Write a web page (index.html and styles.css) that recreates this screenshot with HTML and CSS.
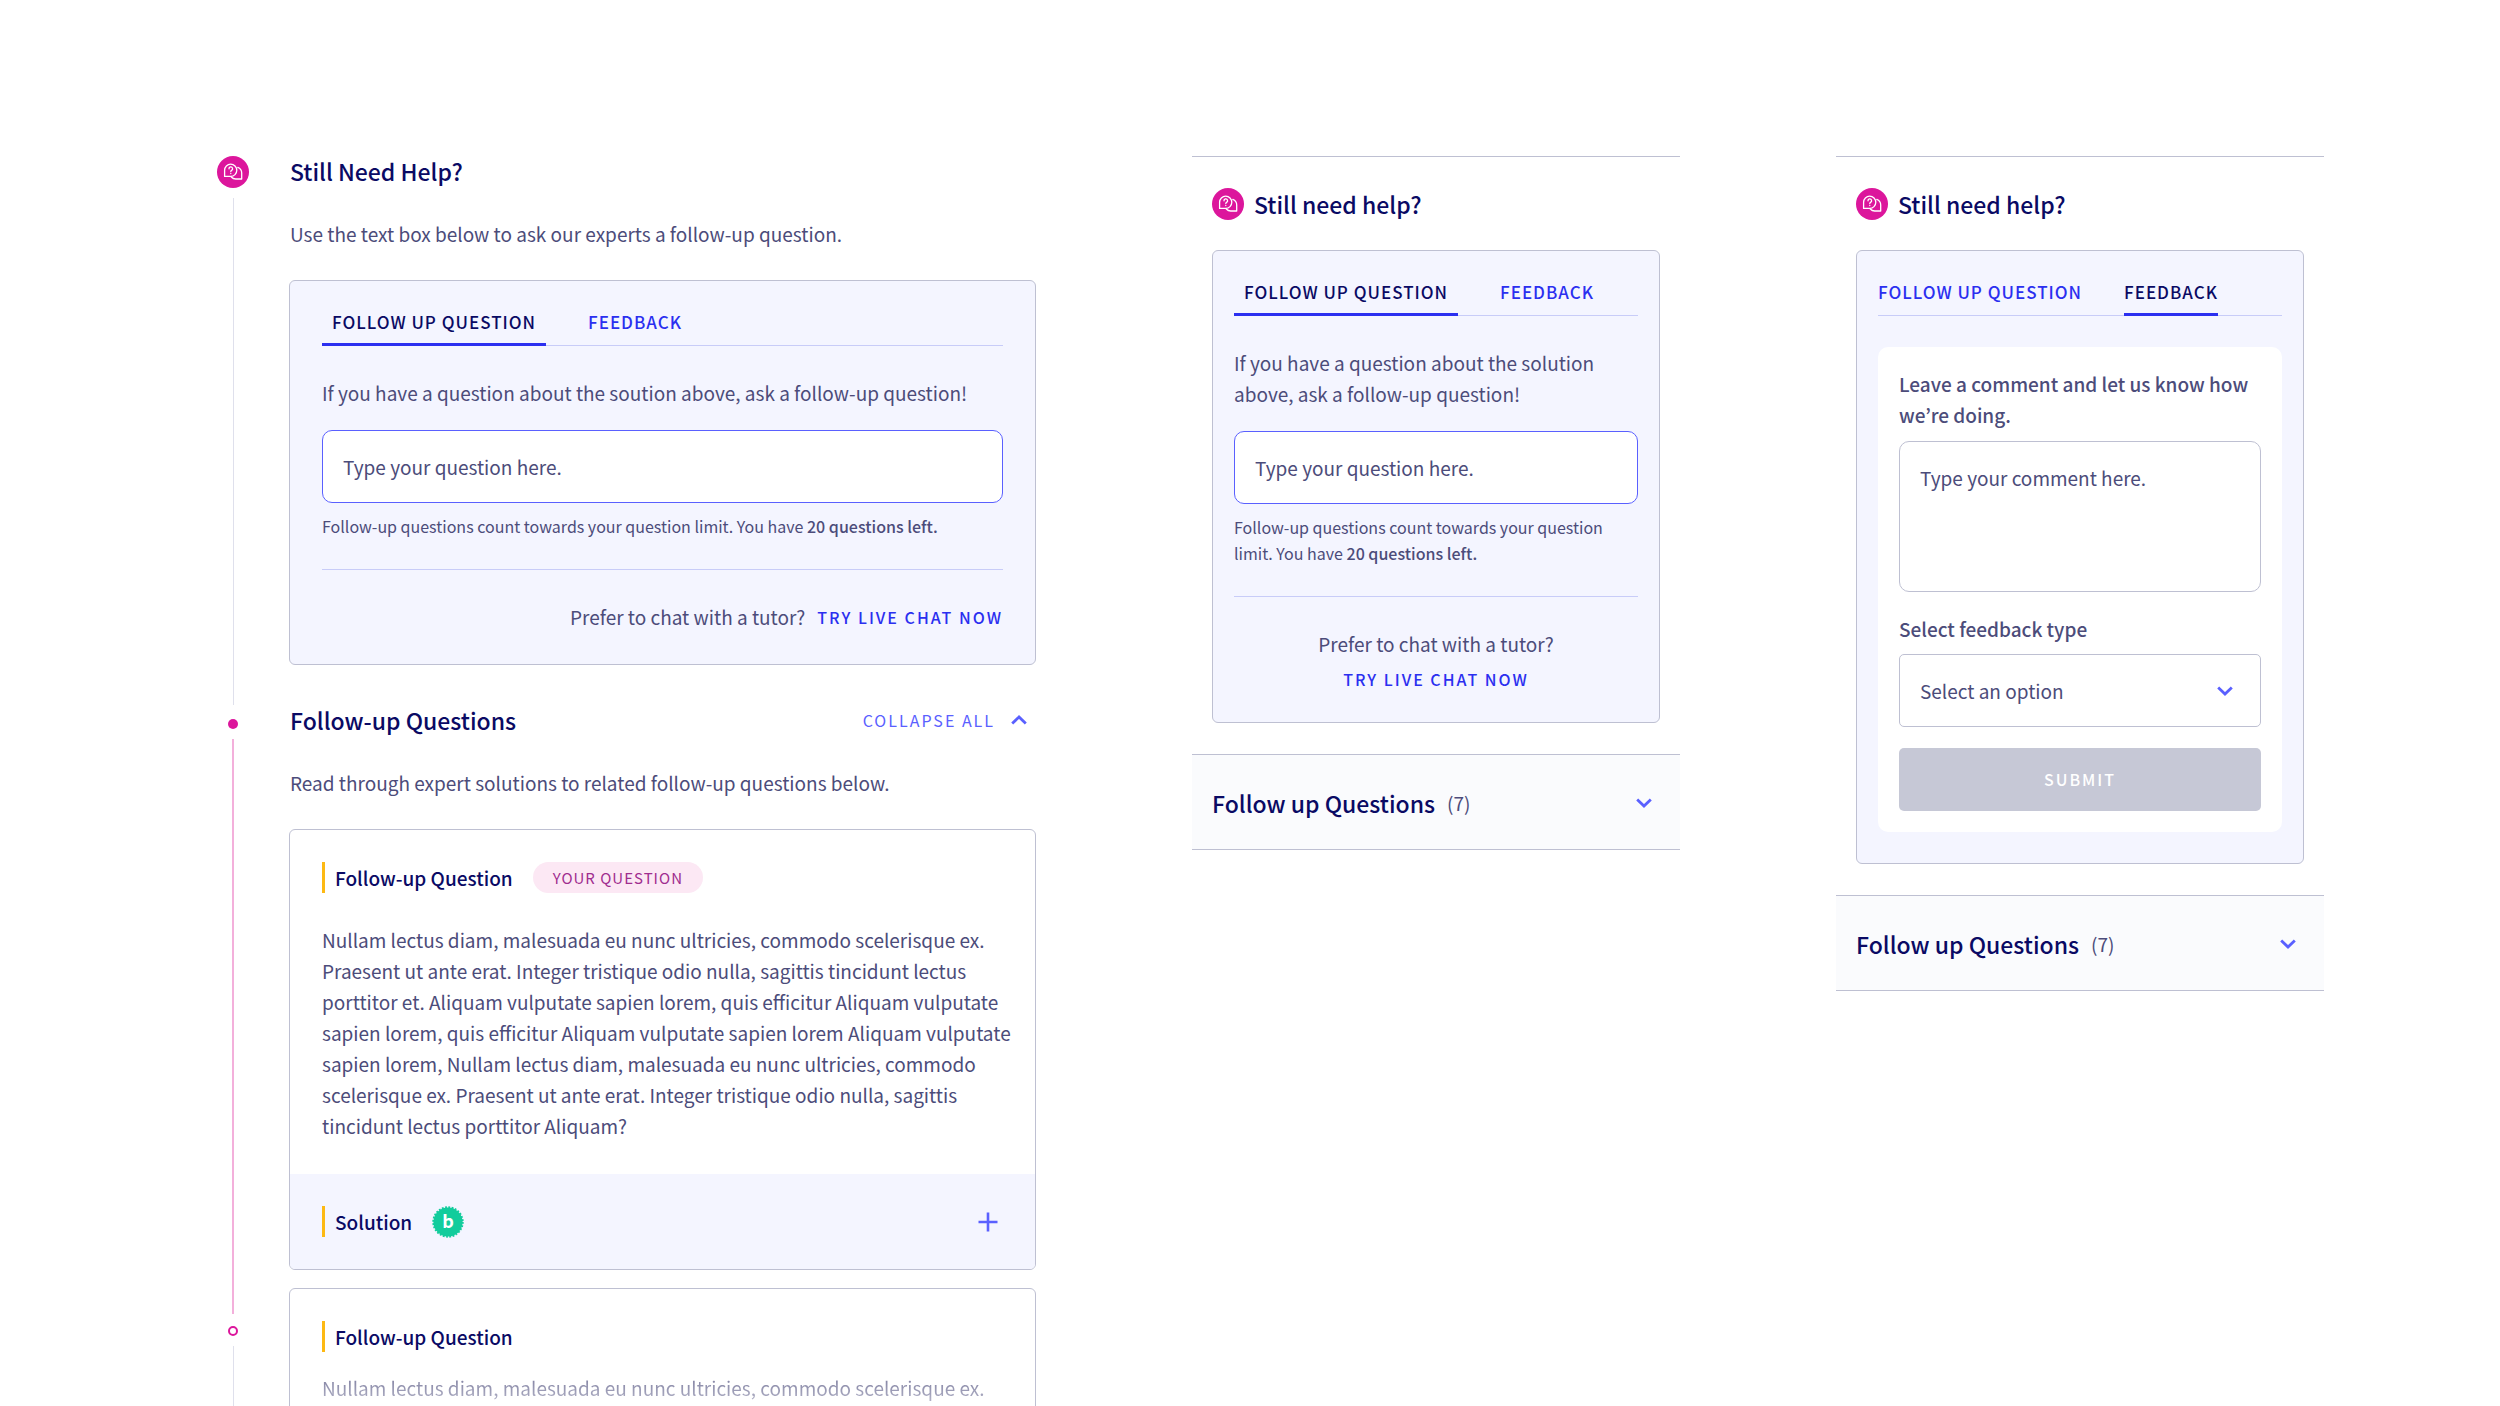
FILE: index.html
```html
<!DOCTYPE html>
<html lang="en">
<head>
<meta charset="utf-8">
<meta name="viewport" content="width=device-width, initial-scale=1">
<title>Still Need Help?</title>
<link rel="stylesheet" href="styles.css">
</head>
<body>
<svg class="sprite" aria-hidden="true">
  <symbol id="icon-help" viewBox="0 0 32 32">
    <circle cx="16" cy="16" r="16" fill="#dc169c"/>
    <g fill="none" stroke="#fff" stroke-width="1.3" stroke-linecap="round" stroke-linejoin="round">
      <path d="M7.6 20.4v-6.1a6.1 6.1 0 1 1 6.1 6.1z"/>
      <path d="M20.8 11.4a6.1 6.1 0 0 1 3.9 5.7V23h-6a6.1 6.1 0 0 1-4.4-2"/>
      <path d="M12 12.8a1.8 1.8 0 1 1 2.6 1.5c-.6.3-.8.6-.8 1.2M13.8 17.4v.1"/>
    </g>
  </symbol>
  <symbol id="icon-down" viewBox="0 0 16 10">
    <path d="M1.2 1.4 8 8l6.800-6.600" fill="none" stroke="#5a60ff" stroke-width="2.800"/>
  </symbol>
  <symbol id="icon-up" viewBox="0 0 16 10">
    <path d="M1.200 8.600 8 2l6.800 6.600" fill="none" stroke="#5a60ff" stroke-width="2.800"/>
  </symbol>
  <symbol id="icon-plus" viewBox="0 0 20 20">
    <path d="M10 0.500v19M0.500 10h19" fill="none" stroke="#5a60ff" stroke-width="2.600"/>
  </symbol>
</svg>

<main class="board">
  <div class="timeline">
    <section class="step">
      <div class="rail">
        <svg class="help-icon" aria-hidden="true"><use href="#icon-help"/></svg>
        <span class="line"></span>
      </div>
      <div class="step-body">
        <div class="title-row">
          <h2 class="title">Still Need Help?</h2>
        </div>
        <p class="lead">Use the text box below to ask our experts a follow-up question.</p>
        <div class="panel panel-wide">
          <div class="tabs" role="tablist">
            <button class="tab is-active" type="button" role="tab" aria-selected="true">FOLLOW UP QUESTION</button>
            <button class="tab" type="button" role="tab" aria-selected="false">FEEDBACK</button>
          </div>
          <label class="prompt" for="question-wide">If you have a question about the soution above, ask a follow-up question!</label>
          <input class="field" id="question-wide" type="text" placeholder="Type your question here.">
          <p class="note">Follow-up questions count towards your question limit. You have <strong>20 questions left.</strong></p>
          <div class="chat">
            <span>Prefer to chat with a tutor?</span>
            <a class="chat-link" href="#chat">TRY LIVE CHAT NOW</a>
          </div>
        </div>
      </div>
    </section>

    <section class="step">
      <div class="rail rail-current">
        <span class="dot"></span>
        <span class="line"></span>
      </div>
      <div class="step-body">
        <div class="title-row">
          <h2 class="title">Follow-up Questions</h2>
          <button class="collapse" type="button">COLLAPSE ALL <svg class="chevron" aria-hidden="true"><use href="#icon-up"/></svg></button>
        </div>
        <p class="lead">Read through expert solutions to related follow-up questions below.</p>
        <article class="card">
          <div class="question">
            <header class="card-head">
              <h3 class="card-title">Follow-up Question</h3>
              <span class="pill">YOUR QUESTION</span>
            </header>
            <p class="card-text">Nullam lectus diam, malesuada eu nunc ultricies, commodo scelerisque ex. Praesent ut ante erat. Integer tristique odio nulla, sagittis tincidunt lectus porttitor et. Aliquam vulputate sapien lorem, quis efficitur Aliquam vulputate sapien lorem, quis efficitur Aliquam vulputate sapien lorem Aliquam vulputate sapien lorem, Nullam lectus diam, malesuada eu nunc ultricies, commodo scelerisque ex. Praesent ut ante erat. Integer tristique odio nulla, sagittis tincidunt lectus porttitor Aliquam?</p>
          </div>
          <div class="solution">
            <h3 class="card-title">Solution</h3>
            <svg class="badge" viewBox="0 0 32 32" role="img" aria-label="Verified">
              <circle cx="16" cy="16" r="14.600" fill="#12cc9c"/>
              <circle cx="16" cy="16" r="14.500" fill="none" stroke="#12cc9c" stroke-width="2.400" stroke-dasharray="1.800 1.450"/>
              <text class="badge-letter" x="16" y="22" text-anchor="middle">b</text>
            </svg>
            <button class="expand" type="button" aria-label="Show solution"><svg class="plus" aria-hidden="true"><use href="#icon-plus"/></svg></button>
          </div>
        </article>
      </div>
    </section>

    <section class="step">
      <div class="rail rail-next">
        <span class="dot dot-open"></span>
        <span class="line"></span>
      </div>
      <div class="step-body">
        <article class="card">
          <div class="question question-preview">
            <header class="card-head">
              <h3 class="card-title">Follow-up Question</h3>
            </header>
            <p class="card-text">Nullam lectus diam, malesuada eu nunc ultricies, commodo scelerisque ex.</p>
          </div>
        </article>
      </div>
    </section>
  </div>

  <section class="phone">
    <div class="phone-main">
      <h2 class="title phone-title"><svg class="help-icon" aria-hidden="true"><use href="#icon-help"/></svg>Still need help?</h2>
      <div class="panel">
        <div class="tabs" role="tablist">
          <button class="tab is-active" type="button" role="tab" aria-selected="true">FOLLOW UP QUESTION</button>
          <button class="tab" type="button" role="tab" aria-selected="false">FEEDBACK</button>
        </div>
        <label class="prompt" for="question-phone">If you have a question about the solution above, ask a follow-up question!</label>
        <input class="field" id="question-phone" type="text" placeholder="Type your question here.">
        <p class="note">Follow-up questions count towards your question limit. You have <strong>20 questions left.</strong></p>
        <div class="chat chat-stacked">
          <span>Prefer to chat with a tutor?</span>
          <a class="chat-link" href="#chat">TRY LIVE CHAT NOW</a>
        </div>
      </div>
    </div>
    <button class="accordion" type="button">
      <span class="title">Follow up Questions</span>
      <span class="count">(7)</span>
      <svg class="chevron" aria-hidden="true"><use href="#icon-down"/></svg>
    </button>
  </section>

  <section class="phone">
    <div class="phone-main">
      <h2 class="title phone-title"><svg class="help-icon" aria-hidden="true"><use href="#icon-help"/></svg>Still need help?</h2>
      <div class="panel">
        <div class="tabs tabs-flush" role="tablist">
          <button class="tab" type="button" role="tab" aria-selected="false">FOLLOW UP QUESTION</button>
          <button class="tab is-active" type="button" role="tab" aria-selected="true">FEEDBACK</button>
        </div>
        <form class="feedback">
          <label class="form-label" for="comment">Leave a comment and let us know how we’re doing.</label>
          <textarea class="field comment" id="comment" placeholder="Type your comment here."></textarea>
          <label class="form-label" for="type">Select feedback type</label>
          <div class="select-wrap">
            <select class="field select" id="type"><option>Select an option</option></select>
            <svg class="chevron" aria-hidden="true"><use href="#icon-down"/></svg>
          </div>
          <button class="submit" type="submit" disabled>SUBMIT</button>
        </form>
      </div>
    </div>
    <button class="accordion" type="button">
      <span class="title">Follow up Questions</span>
      <span class="count">(7)</span>
      <svg class="chevron" aria-hidden="true"><use href="#icon-down"/></svg>
    </button>
  </section>
</main>
</body>
</html>
```
FILE: styles.css
```css
:root {
  --navy: #0a0a64;
  --text: #4c4c7a;
  --blue: #2b2ff0;
  --violet: #5a60ff;
  --border: #bec0d2;
  --rule: #c8ccf8;
  --tint: #f4f5ff;
  --magenta: #dc169c;
}

* {
  box-sizing: border-box;
}

body {
  margin: 0;
  background: #fff;
  color: var(--text);
  font: 400 19px/31px "Noto Sans CJK KR", "Noto Sans", sans-serif;
}

h2, h3, p {
  margin: 0;
}

button, input, textarea, select {
  font: inherit;
  color: inherit;
}

button {
  border: 0;
  padding: 0;
  background: none;
}

svg {
  display: block;
  flex: none;
}

.sprite {
  position: absolute;
  width: 0;
  height: 0;
}

.board {
  display: grid;
  grid-template-columns: minmax(0, 819fr) minmax(0, 488fr) minmax(0, 488fr);
  column-gap: 156px;
  align-items: start;
  height: 100vh;
  overflow: hidden;
  padding: 156px 176px 0 217px;
}

.title {
  color: var(--navy);
  font-size: 23px;
  font-weight: 500;
  line-height: 30px;
}

.help-icon {
  width: 32px;
  height: 32px;
}

.chevron {
  width: 16px;
  height: 10px;
}

/* Timeline */

.step {
  display: grid;
  grid-template-columns: 32px minmax(0, 1fr);
  column-gap: 40px;
}

.step:first-child .step-body {
  padding-bottom: 40px;
}

.step:nth-child(2) .step-body {
  padding-bottom: 18px;
}

.rail {
  display: flex;
  flex-direction: column;
  align-items: center;
  gap: 10px;
}

.line {
  flex: 1;
  width: 1px;
  background: #dfe0ec;
}

.rail-current {
  padding-top: 14px;
  margin-bottom: -26px;
}

.rail-current .line {
  width: 2px;
  background: #f3b0db;
}

.rail-next {
  padding-top: 38px;
}

.dot {
  width: 10px;
  height: 10px;
  border-radius: 50%;
  background: var(--magenta);
}

.dot-open {
  border: 2px solid var(--magenta);
  background: #fff;
}

.title-row {
  display: flex;
  align-items: center;
  justify-content: space-between;
  padding-left: 1px;
}

.lead {
  margin: 32px 0 31px;
  padding-left: 1px;
}

.collapse {
  display: flex;
  align-items: center;
  gap: 16px;
  padding-right: 9px;
  color: var(--violet);
  font-size: 16px;
  line-height: 24px;
  letter-spacing: 2px;
}

/* Tabbed panel */

.panel {
  padding: 29px 21px 31px;
  border: 1px solid var(--border);
  border-radius: 6px;
  background: var(--tint);
}

.panel-wide {
  padding: 29px 32px 32px;
}

.tabs {
  display: flex;
  gap: 32px;
  margin-bottom: 31px;
  box-shadow: inset 0 -1px var(--rule);
}

.tab {
  padding: 0 10px 9px;
  border-bottom: 3px solid transparent;
  color: var(--blue);
  font-size: 17px;
  font-weight: 500;
  line-height: 24px;
  letter-spacing: 1px;
}

.tab.is-active {
  border-color: var(--blue);
  color: var(--navy);
}

.tabs-flush {
  gap: 42px;
}

.tabs-flush .tab {
  padding-inline: 0;
}

.prompt {
  display: block;
}

.field {
  display: block;
  width: 100%;
  height: 73px;
  margin: 0;
  padding: 0 20px;
  border: 1px solid var(--violet);
  border-radius: 10px;
  background: #fff;
  outline: 0;
}

.field::placeholder {
  color: var(--text);
  opacity: 1;
}

.prompt + .field {
  margin-top: 22px;
}

.note {
  margin-top: 10px;
  font-size: 16px;
  line-height: 26px;
}

.note strong {
  font-weight: 500;
}

.chat {
  display: flex;
  align-items: center;
  justify-content: flex-end;
  gap: 12px;
  margin-top: 30px;
  padding-top: 31px;
  border-top: 1px solid var(--rule);
}

.chat-stacked {
  flex-direction: column;
  gap: 8px;
}

.chat-link {
  color: var(--blue);
  font-size: 16px;
  font-weight: 500;
  line-height: 24px;
  letter-spacing: 2px;
  text-decoration: none;
}

/* Question cards */

.card {
  overflow: hidden;
  border: 1px solid var(--border);
  border-radius: 6px;
}

.question {
  padding: 32px 24px 33px 32px;
}

.card-head {
  display: flex;
  align-items: center;
  gap: 20px;
  margin-bottom: 31px;
}

.card-title {
  padding-left: 10px;
  border-left: 3px solid #fdb913;
  color: var(--navy);
  font-size: 19px;
  font-weight: 500;
  line-height: 31px;
}

.pill {
  padding: 0 20px;
  border-radius: 16px;
  background: #fce8f4;
  color: #a02d8f;
  font-size: 15px;
  letter-spacing: 1px;
}

.solution {
  display: flex;
  align-items: center;
  gap: 20px;
  padding: 32px;
  background: var(--tint);
}

.badge {
  width: 32px;
  height: 32px;
  margin-block: -1px;
}

.badge-letter {
  fill: #fff;
  font-size: 18px;
  font-weight: 700;
}

.expand {
  margin-left: auto;
  padding-right: 5px;
}

.plus {
  width: 20px;
  height: 20px;
}

.question-preview {
  padding-bottom: 64px;
}

.question-preview .card-head {
  margin-bottom: 20px;
}

.question-preview .card-text {
  background: linear-gradient(#77779a, #b4b4c8);
  background-clip: text;
  color: transparent;
}

/* Phone layouts */

.phone {
  border-top: 1px solid var(--border);
}

.phone-main {
  padding: 31px 20px;
}

.phone-title {
  display: flex;
  align-items: center;
  gap: 10px;
  margin-bottom: 30px;
  line-height: 32px;
}

.accordion {
  display: flex;
  align-items: center;
  width: 100%;
  padding: 32px 28px 31px 20px;
  border: solid var(--border);
  border-width: 1px 0;
  background: #fafbfd;
  text-align: left;
}

.count {
  margin-left: 12px;
}

.accordion .chevron {
  margin-left: auto;
}

.feedback {
  padding: 21px;
  border-radius: 10px;
  background: #fff;
}

.form-label {
  display: block;
  font-weight: 500;
}

.comment {
  height: 151px;
  margin: 11px 0 21px;
  padding-block: 20px;
  border-color: var(--border);
  resize: none;
}

.select-wrap {
  position: relative;
  margin: 10px 0 21px;
}

.select {
  border-color: var(--border);
  border-radius: 5px;
  appearance: none;
}

.select-wrap .chevron {
  position: absolute;
  top: 50%;
  right: 28px;
  transform: translateY(-50%);
  pointer-events: none;
}

.submit {
  display: block;
  width: 100%;
  height: 63px;
  border-radius: 5px;
  background: #c6c8d6;
  color: #fff;
  font-size: 16px;
  font-weight: 500;
  letter-spacing: 2px;
}
```
